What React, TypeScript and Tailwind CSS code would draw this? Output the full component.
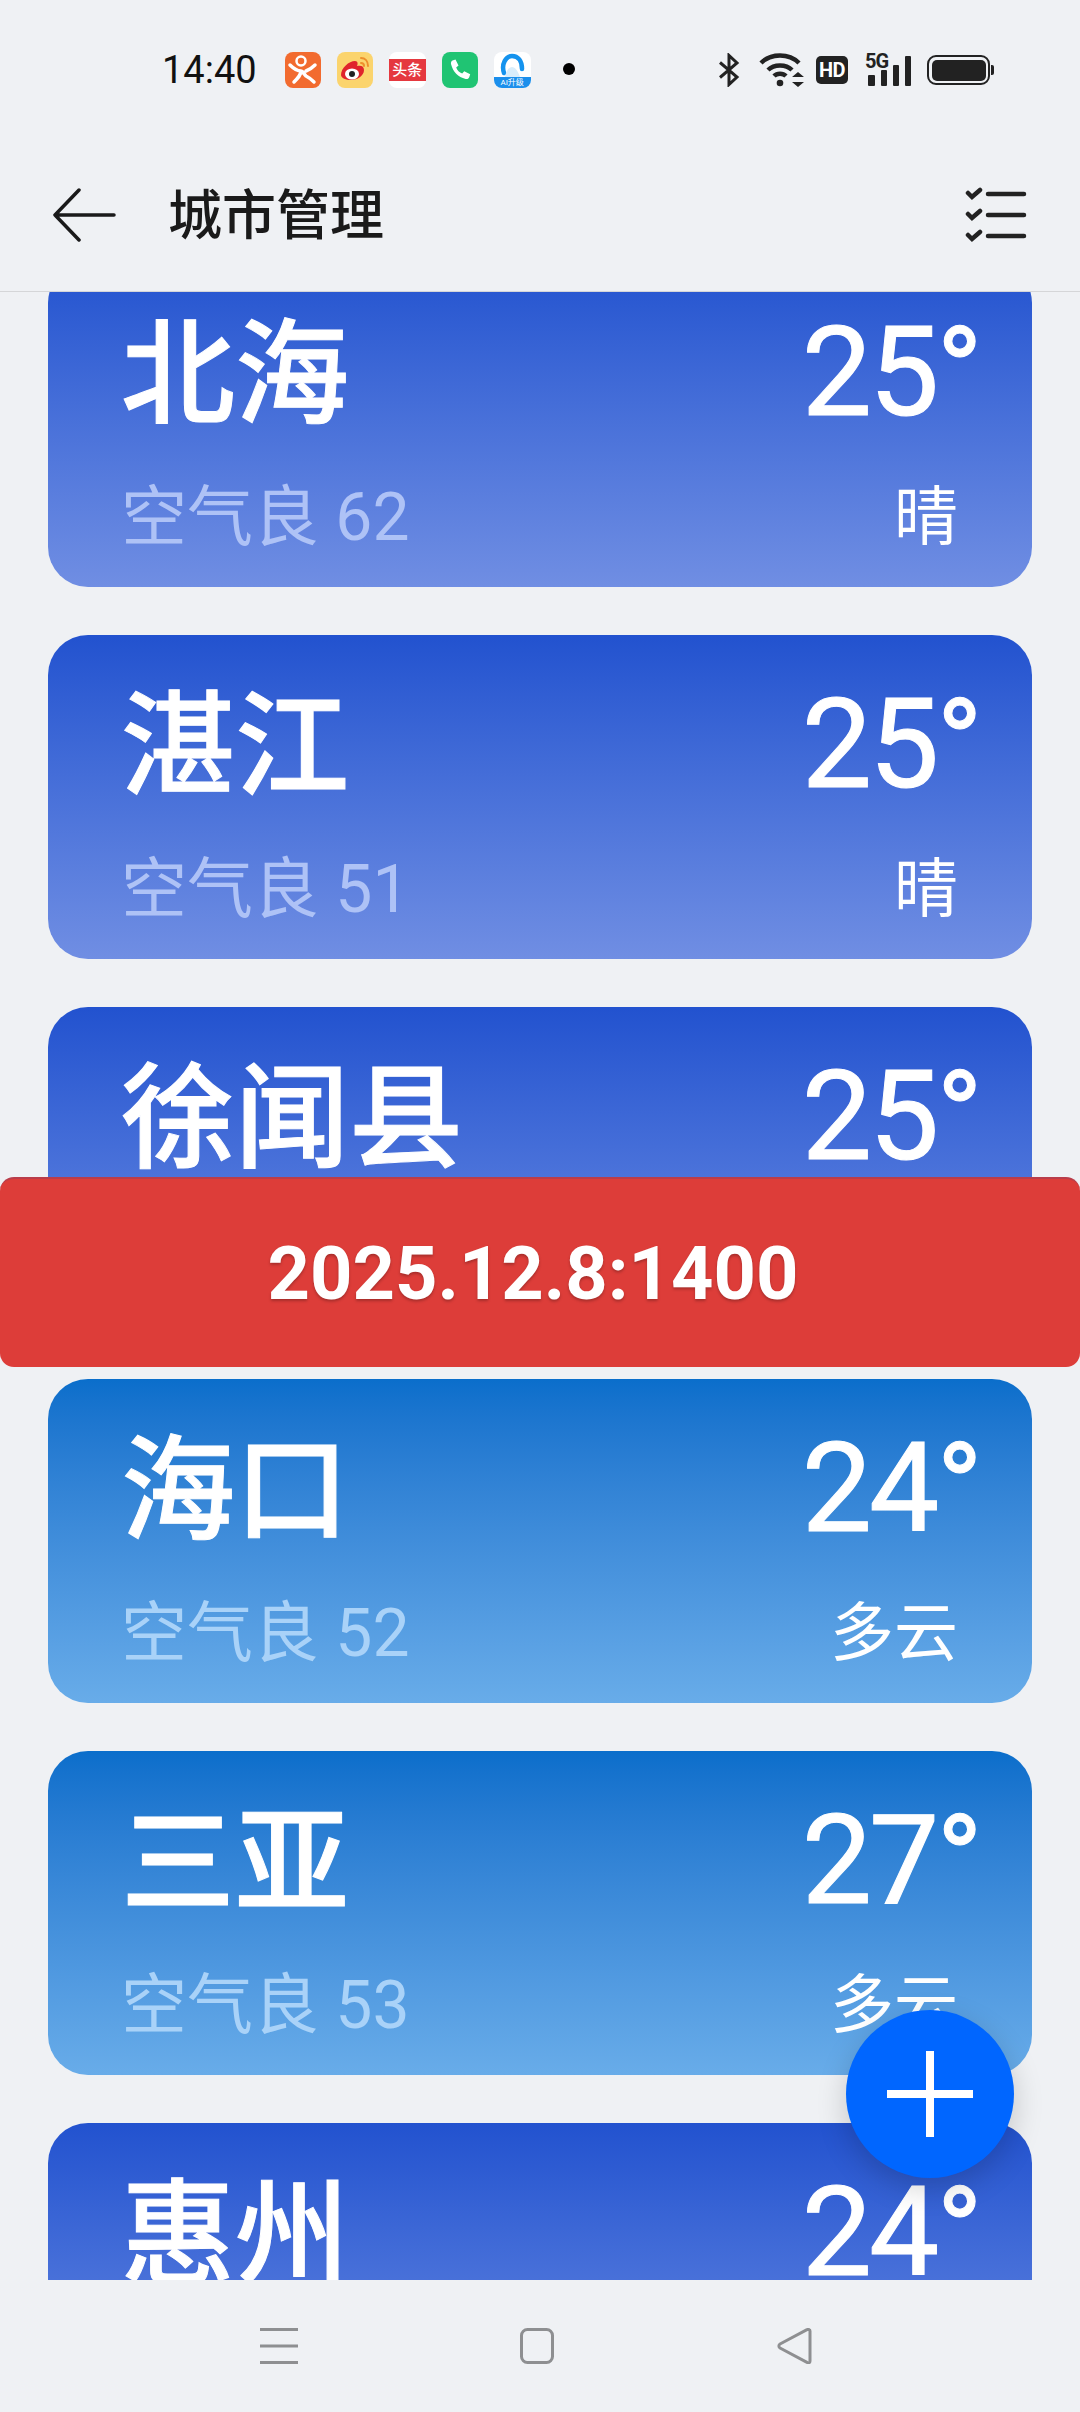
import React from 'react';

interface City {
  name: string;
  temp: string;
  air?: string;
  weather?: string;
  tone: 'clear' | 'cloud';
}

const cities: City[] = [
  { name: '北海', temp: '25', air: '空气良 62', weather: '晴', tone: 'clear' },
  { name: '湛江', temp: '25', air: '空气良 51', weather: '晴', tone: 'clear' },
  { name: '徐闻县', temp: '25', tone: 'clear' },
  { name: '海口', temp: '24', air: '空气良 52', weather: '多云', tone: 'cloud' },
  { name: '三亚', temp: '27', air: '空气良 53', weather: '多云', tone: 'cloud' },
  { name: '惠州', temp: '24', tone: 'clear' },
];

const AppIcons = () => (
  <div className="flex items-center gap-[16px] ml-[28px]">
    <svg width="36" height="36" viewBox="0 0 36 36">
      <rect width="36" height="36" rx="8" fill="#f26b2f" />
      <circle cx="16" cy="9" r="4.500" fill="none" stroke="#fff" strokeWidth="2.500" />
      <path d="M5 13c4 4 7 6 11 6 2 0 3 3 5 5 2 1 5 3 8 6M16 19c0 4-3 7-7 11M21 19c3-1 6-3 9-6" fill="none" stroke="#fff" strokeWidth="3.500" strokeLinecap="round" />
    </svg>
    <svg width="36" height="36" viewBox="0 0 36 36">
      <rect width="36" height="36" rx="8" fill="#fbd46d" />
      <path d="M4 23c0-7 8-14 14-14 3 0 3 3 2 5 4-1 7 0 7 4 0 6-7 10-13 10-5 0-10-2-10-5z" fill="#e0242c" />
      <ellipse cx="15" cy="22" rx="7" ry="5.500" fill="#fff" />
      <circle cx="15" cy="22" r="3" fill="#222" />
      <path d="M24 6c4 0 7 3 7 8M24 11c2 0 3 1 3 3" fill="none" stroke="#ee8f2c" strokeWidth="2" strokeLinecap="round" />
    </svg>
    <div className="w-[37px] h-[36px] rounded-[8px] bg-white flex items-center justify-center">
      <div className="w-full h-[22px] bg-[#e5383f] text-white text-[15px] leading-[22px] text-center font-medium whitespace-nowrap">头条</div>
    </div>
    <svg width="36" height="36" viewBox="0 0 36 36">
      <rect width="36" height="36" rx="8" fill="#20c473" />
      <path d="M10.500 8.500l3-1 3 6-2.300 2c1 3 3 5 6 6l2-2.300 6 3-1 3c-.6 1.500-2 2-3.500 1.800C16 25 11 20 9 12c-.2-1.500.2-3 1.500-3.500z" fill="#fff" />
    </svg>
    <div className="w-[37px] h-[36px] rounded-[8px] bg-white overflow-hidden flex flex-col items-center justify-between">
      <svg width="28" height="25" viewBox="0 0 28 25">
        <path d="M6 21C3 12 8 4 14 4c6 0 10 5 10 13" fill="none" stroke="#1593ee" strokeWidth="4.500" strokeLinecap="round" />
        <path d="M7 25c1-6 4-10 7-10s6 4 8 10z" fill="#d8edfb" />
      </svg>
      <div className="w-full h-[11px] bg-[#1b8fec] text-white text-[8px] leading-[11px] text-center whitespace-nowrap">AI升级</div>
    </div>
    <div className="w-[12px] h-[12px] rounded-full bg-black ml-[16px] -mt-[3px]" />
  </div>
);

const SystemIcons = () => (
  <div className="flex items-center">
    <svg width="22" height="34" viewBox="0 0 22 34">
      <path d="M2 9.500l17 14.500-8 7.500V2.500l8 7.500L2 24.500" fill="none" stroke="#222" strokeWidth="3" strokeLinejoin="miter" />
    </svg>
    <svg className="ml-[19px]" width="46" height="34" viewBox="0 0 46 34">
      <path d="M2 10c10-10 28-10 38 0M9 17c6-6 18-6 24 0M15 23c3-3 9-3 12 0" fill="none" stroke="#222" strokeWidth="4.500" />
      <circle cx="21" cy="30" r="3.300" fill="#222" />
      <path d="M39 19l6 5H33zM39 34l-6-5h12z" fill="#222" />
    </svg>
    <div className="ml-[11px] w-[32px] h-[28px] rounded-[5px] bg-[#222] text-white text-[20px] leading-[28px] font-bold text-center tracking-[-0.5px]">HD</div>
    <div className="ml-[17px] relative w-[46px] h-[32px]">
      <span className="absolute left-0 -top-[3px] text-[#222] text-[20px] leading-[20px] font-bold tracking-[-1px]">5G</span>
      <div className="absolute inset-0 flex items-end gap-[6px] pl-[3px]">
        <div className="w-[7px] h-[11px] rounded-[1px] bg-[#222]" />
        <div className="w-[6px] h-[16px] rounded-[1px] bg-[#222]" />
        <div className="w-[6px] h-[21px] rounded-[1px] bg-[#222]" />
        <div className="w-[6px] h-[30px] rounded-[1px] bg-[#222]" />
      </div>
    </div>
    <div className="ml-[16px] flex items-center">
      <div className="w-[63px] h-[30px] rounded-[9px] border-[2.500px] border-[#222] p-[2.500px]">
        <div className="w-full h-full rounded-[5px] bg-[#222]" />
      </div>
      <div className="ml-[1px] w-[3px] h-[10px] rounded-r-[2px] bg-[#222]" />
    </div>
  </div>
);

const CityCard = ({ city }: { city: City }) => (
  <div
    className={
      city.tone === 'clear'
        ? 'h-[324px] shrink-0 rounded-[40px] pl-[73px] pr-[52px] text-white bg-gradient-to-b from-[#2252cf] to-[#708ee3]'
        : 'h-[324px] shrink-0 rounded-[40px] pl-[73px] pr-[52px] text-white bg-gradient-to-b from-[#0a6ecb] to-[#68ace9]'
    }
  >
    <div className="flex items-center justify-between h-[219px]">
      <span className="text-[114px] leading-[130px] font-medium mt-[4px] [-webkit-text-stroke:1px_white]">{city.name}</span>
      <span className="text-[125px] leading-[130px] tracking-[-3px] [-webkit-text-stroke:1px_white]">{city.temp}°</span>
    </div>
    {city.air && (
      <div className="flex items-center justify-between pr-[22px] -mt-[4px]">
        <span className={city.tone === 'clear' ? 'text-[66px] leading-[80px] text-[#aec2f6]' : 'text-[66px] leading-[80px] text-[#a9d2f8]'}>{city.air}</span>
        <span className="text-[64px] leading-[80px]">{city.weather}</span>
      </div>
    )}
  </div>
);

export default function App() {
  return (
    <div className="relative w-[1080px] h-[2412px] overflow-hidden flex flex-col bg-[#eff1f4] font-['Roboto','Noto_Sans_CJK_SC',sans-serif]">
      <div className="h-[140px] shrink-0 flex items-center justify-between pl-[162px] pr-[86px]">
        <div className="flex items-center">
          <span className="text-[38px] leading-[44px] text-[#111]">14:40</span>
          <AppIcons />
        </div>
        <SystemIcons />
      </div>

      <div className="h-[152px] shrink-0 flex items-center justify-between pl-[52px] pr-[52px] border-b border-[#d5d6d8] pb-[2px]">
        <div className="flex items-center gap-[52px]">
          <svg width="64" height="54" viewBox="0 0 64 54">
            <path d="M62 27H3M27 2L3 27l24 25" fill="none" stroke="#1a1a1a" strokeWidth="3.500" strokeLinecap="round" strokeLinejoin="round" />
          </svg>
          <span className="text-[54px] leading-[64px] font-medium text-[#1a1a1a] mt-[5px]">城市管理</span>
        </div>
        <svg width="64" height="56" viewBox="0 0 64 56">
          <g fill="none" stroke="#222" strokeWidth="4.500" strokeLinecap="round">
            <path d="M24 7h36M24 28h36M24 49h36" />
            <path d="M4 6l4 4 8-7M4 27l4 4 8-7M4 48l4 4 8-7" />
          </g>
        </svg>
      </div>

      <div className="relative flex-1 overflow-hidden px-[48px]">
        <div className="flex flex-col gap-[48px] -mt-[29px]">
          {cities.map(city => (
            <CityCard key={city.name} city={city} />
          ))}
        </div>
      </div>

      <div className="h-[132px] shrink-0 flex items-center pl-[260px]">
        <svg width="38" height="36" viewBox="0 0 38 36">
          <path d="M0 1.500h38M0 18h38M0 34.500h38" stroke="#8e8f91" strokeWidth="3" />
        </svg>
        <svg className="ml-[222px]" width="34" height="36" viewBox="0 0 34 36">
          <rect x="1.500" y="1.500" width="31" height="33" rx="6" fill="none" stroke="#8e8f91" strokeWidth="3" />
        </svg>
        <svg className="ml-[223px]" width="36" height="36" viewBox="0 0 36 36">
          <path d="M33 3v30c0 2-1.500 2.500-3 1.300L3 20c-1.500-1-1.500-3 0-4L30 1.700C31.500 1 33 1.500 33 3z" fill="none" stroke="#8e8f91" strokeWidth="3" strokeLinejoin="round" />
        </svg>
      </div>

      <div className="absolute left-0 right-0 top-[1177px] h-[190px] rounded-[14px] bg-[#dd3d39] border-t-2 border-[#b93d4a] flex items-center justify-center pr-[14px]">
        <span className="text-[74px] font-bold text-white [text-shadow:0_2px_3px_rgba(0,0,0,0.25)]">2025.12.8:1400</span>
      </div>

      <div className="absolute left-[846px] top-[2010px] w-[168px] h-[168px] rounded-full bg-[#0066ff] shadow-[0_10px_30px_rgba(0,0,0,0.18)] flex items-center justify-center">
        <svg width="86" height="86" viewBox="0 0 86 86">
          <path d="M43 0v86M0 43h86" stroke="#fff" strokeWidth="8" />
        </svg>
      </div>
    </div>
  );
}
